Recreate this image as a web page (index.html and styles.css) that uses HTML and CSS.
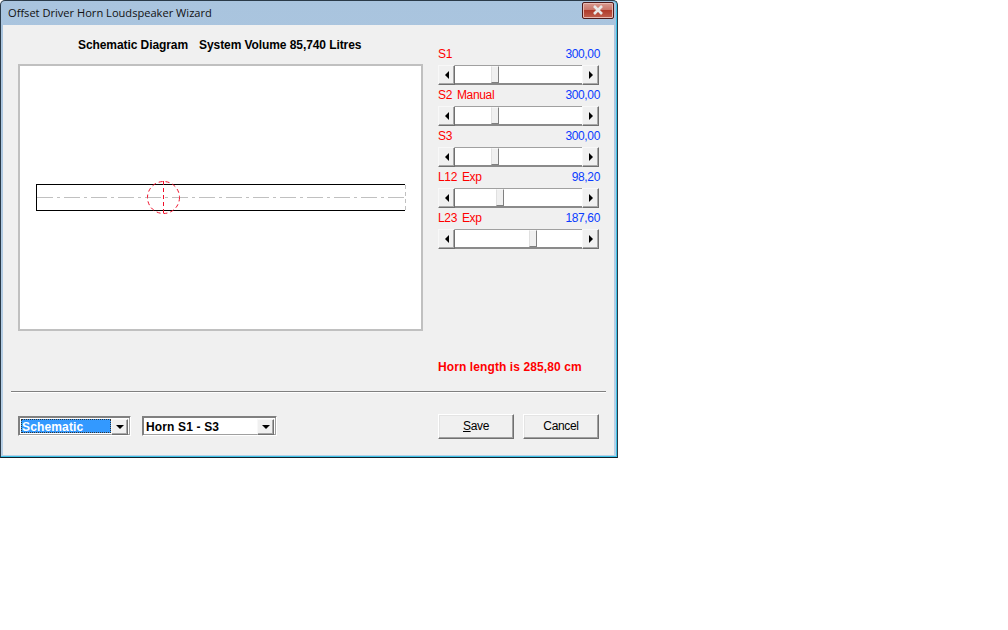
FILE: index.html
```html
<!DOCTYPE html>
<html lang="en">
<head>
<meta charset="utf-8">
<title>Offset Driver Horn Loudspeaker Wizard</title>
<link rel="stylesheet" href="styles.css">
</head>
<body>
<div class="window">
  <div class="titlebar">
    <span class="title">Offset Driver Horn Loudspeaker Wizard</span>
    <button class="close" aria-label="Close">
      <svg width="16" height="10" viewBox="0 0 16 10"><path class="close-x" d="M4 1 L12 9 M12 1 L4 9"/></svg>
    </button>
  </div>
  <div class="client">
    <div class="upper">
      <div class="left">
        <div class="heading"><span>Schematic Diagram</span><span>System Volume 85,740 Litres</span></div>
        <div class="panel">
          <svg class="diagram" width="401" height="263" viewBox="0 0 401 263">
            <path class="horn" d="M16.5 118.5 H385 M16.5 144.5 H385 M16.5 118 V145"/>
            <path class="horn-end" d="M385.5 119 V144"/>
            <path class="axis" d="M17 131.5 H385"/>
            <circle class="driver" cx="143.5" cy="131.5" r="16"/>
            <path class="driver" d="M143.5 115 V148"/>
          </svg>
        </div>
      </div>
      <div class="right">
        <div class="param">
          <div class="param-label"><span class="name">S1</span><span class="value">300,00</span></div>
          <div class="scroll"><span class="sb-btn"><i class="arrow-l"></i></span><span class="track"><span class="fill" style="width:36px"></span><span class="thumb"></span></span><span class="sb-btn"><i class="arrow-r"></i></span></div>
        </div>
        <div class="param">
          <div class="param-label"><span class="name">S2&nbsp; Manual</span><span class="value">300,00</span></div>
          <div class="scroll"><span class="sb-btn"><i class="arrow-l"></i></span><span class="track"><span class="fill" style="width:36px"></span><span class="thumb"></span></span><span class="sb-btn"><i class="arrow-r"></i></span></div>
        </div>
        <div class="param">
          <div class="param-label"><span class="name">S3</span><span class="value">300,00</span></div>
          <div class="scroll"><span class="sb-btn"><i class="arrow-l"></i></span><span class="track"><span class="fill" style="width:36px"></span><span class="thumb"></span></span><span class="sb-btn"><i class="arrow-r"></i></span></div>
        </div>
        <div class="param">
          <div class="param-label"><span class="name">L12&nbsp; Exp</span><span class="value">98,20</span></div>
          <div class="scroll"><span class="sb-btn"><i class="arrow-l"></i></span><span class="track"><span class="fill" style="width:41px"></span><span class="thumb"></span></span><span class="sb-btn"><i class="arrow-r"></i></span></div>
        </div>
        <div class="param">
          <div class="param-label"><span class="name">L23&nbsp; Exp</span><span class="value">187,60</span></div>
          <div class="scroll"><span class="sb-btn"><i class="arrow-l"></i></span><span class="track"><span class="fill" style="width:74px"></span><span class="thumb"></span></span><span class="sb-btn"><i class="arrow-r"></i></span></div>
        </div>
        <div class="length">Horn length is 285,80 cm</div>
      </div>
    </div>
    <div class="separator"></div>
    <div class="footer">
      <div class="combos">
        <div class="combo combo-a"><span class="combo-text selected">Schematic</span><span class="sb-btn combo-btn"><i class="arrow-d"></i></span></div>
        <div class="combo combo-b"><span class="combo-text">Horn S1 - S3</span><span class="sb-btn combo-btn"><i class="arrow-d"></i></span></div>
      </div>
      <div class="buttons">
        <button class="btn"><u>S</u>ave</button>
        <button class="btn">Cancel</button>
      </div>
    </div>
  </div>
</div>
</body>
</html>
```
FILE: styles.css
```css
* { box-sizing: border-box; }
html, body { margin: 0; padding: 0; background: #fff; }
body { width: 1008px; height: 630px; overflow: hidden; font-family: "Liberation Sans", Arial, sans-serif; font-size: 12px; }

.window {
  width: 618px;
  height: 458px;
  display: flex;
  flex-direction: column;
  background: linear-gradient(#a9c4de 0, #b8d0e6 100%);
  border: 1px solid #2a3a48;
  border-radius: 5px 5px 0 0;
  border-bottom: 1px solid #10202c;
  padding: 0 3px 2px 2px;
  box-shadow: inset 0 -1px 0 #3cc3e8, inset -1px 0 0 #3cc3e8;
}
.titlebar {
  height: 24px;
  flex: none;
  display: flex;
  align-items: center;
  justify-content: space-between;
  padding-left: 5px;
}
.title { font-family: "Open Sans", sans-serif; font-size: 11.1px; color: #111; position: relative; top: -1px; }
.close {
  width: 32px;
  height: 17px;
  margin: -6px 0 0 0;
  padding: 0;
  border: 1px solid #4d1a1a;
  border-radius: 2px;
  background: linear-gradient(#d99a90 0, #c9766a 45%, #b03c2c 50%, #c0604e 100%);
  box-shadow: inset 0 0 0 1px #e8b8b0;
  display: flex;
  align-items: center;
  justify-content: center;
}
.close-x { stroke: #e8e8e8; stroke-width: 2.6; fill: none; }

.client {
  flex: 1;
  background: #f0f0f0;
  display: flex;
  flex-direction: column;
  padding: 0 8px 0 8px;
}
.upper { display: flex; height: 366px; flex: none; }
.left { width: 412px; padding-left: 7px; display: flex; flex-direction: column; }
.heading {
  height: 39px;
  padding: 13px 0 0 60px;
  display: flex;
  gap: 11px;
  font-weight: bold;
  letter-spacing: -0.08px;
  color: #000;
  white-space: nowrap;
}
.panel { width: 405px; height: 267px; border: 2px solid #c0c0c0; background: #fff; }
.diagram { display: block; }
.horn { stroke: #000; stroke-width: 1; fill: none; }
.horn-end { stroke: #c0c0c0; stroke-width: 1; fill: none; stroke-dasharray: 4 3; }
.axis { stroke: #c0c0c0; stroke-width: 1; fill: none; stroke-dasharray: 16 4 3 4; }
.driver { stroke: #f0102a; stroke-width: 1; fill: none; stroke-dasharray: 4 3; }

.right { width: 161px; margin-left: 15px; padding-top: 19px; display: flex; flex-direction: column; }
.param { height: 41px; display: flex; flex-direction: column; }
.param-label { height: 21px; margin-right: -1px; display: flex; justify-content: space-between; align-items: center; padding-bottom: 1px; letter-spacing: -0.35px; }
.name { color: #f00; word-spacing: -0.5px; }
.value { color: #0a3cff; }
.scroll { height: 20px; display: flex; }
.sb-btn {
  width: 17px;
  flex: none;
  background: #f0f0f0;
  border: 1px solid;
  border-color: #f8f8f8 #707070 #707070 #f8f8f8;
  box-shadow: inset -1px -1px 0 #a8a8a8;
  display: flex;
  align-items: center;
  justify-content: center;
}
.track { flex: 1; background: #fff; display: flex; border-top: 1px solid #a0a0a0; border-bottom: 2px solid #8a8a8a; }
.fill { display: block; flex: none; }
.thumb { width: 8px; flex: none; background: #f0f0f0; border: 1px solid; border-color: #f8f8f8 #808080 #808080 #e0e0e0; }
.arrow-l, .arrow-r, .arrow-d { display: block; width: 0; height: 0; border-style: solid; border-color: transparent; }
.arrow-l { border-width: 4px 4px 4px 0; border-right-color: #000; }
.arrow-r { border-width: 4px 0 4px 4px; border-left-color: #000; }
.arrow-d { border-width: 4px 4px 0 4px; border-top-color: #000; }

.length {
  margin-top: 111px;
  font-weight: bold;
  color: #f00;
  letter-spacing: 0.1px;
  white-space: nowrap;
}

.separator { height: 2px; width: 595px; flex: none; border-top: 1px solid #808080; border-bottom: 1px solid #fff; }
.footer { flex: 1; display: flex; justify-content: space-between; padding: 21px 7px 0 7px; }
.combos { display: flex; gap: 11px; padding-top: 2px; }
.combo {
  height: 20px;
  display: flex;
  border: 1px solid;
  border-color: #808080 #fff #fff #808080;
  box-shadow: inset 1px 1px 0 #808080, inset -1px -1px 0 #a0a0a0;
  background: #fff;
  padding: 2px;
  font-weight: bold;
  letter-spacing: 0.15px;
}
.combo-a { width: 113px; }
.combo-b { width: 135px; }
.combo-text { flex: 1; line-height: 16px; padding-left: 1px; color: #000; }
.selected { background: #3399ff; color: #fff; outline: 1px dotted #333; outline-offset: -1px; }
.combo-btn { width: 17px; height: 16px; margin: 0; }
.buttons { display: flex; gap: 9px; }
.btn {
  width: 76px;
  height: 25px;
  padding: 0 0 2px;
  font: inherit;
  letter-spacing: -0.35px;
  color: #000;
  background: #f0f0f0;
  border: 1px solid;
  border-color: #fff #707070 #707070 #fff;
  box-shadow: inset -1px -1px 0 #a0a0a0, inset 1px 1px 0 #e4e4e4;
}
```
